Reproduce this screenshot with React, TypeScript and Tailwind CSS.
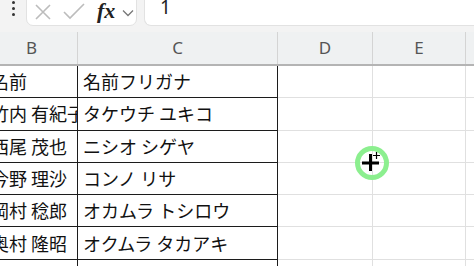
import React from 'react';

const rows: [string, string][] = [
  ['名前', '名前フリガナ'],
  ['竹内 有紀子', 'タケウチ ユキコ'],
  ['西尾 茂也', 'ニシオ シゲヤ'],
  ['今野 理沙', 'コンノ リサ'],
  ['岡村 稔郎', 'オカムラ トシロウ'],
  ['奥村 隆昭', 'オクムラ タカアキ'],
  ['', ''],
];

const jp = { fontFamily: '"Noto Sans CJK JP", "Noto Sans", sans-serif' };
const ui = { fontFamily: '"Noto Sans", "Open Sans", sans-serif' };

function Toolbar() {
  return (
    <div className="h-[32px] bg-[#f3f3f3] flex items-start">
      <div className="w-[26px] flex flex-col items-center gap-[3px] pt-[1px] pl-[1px]">
        <span className="w-[3px] h-[3px] rounded-full bg-[#333]" />
        <span className="w-[3px] h-[3px] rounded-full bg-[#333]" />
        <span className="w-[3px] h-[3px] rounded-full bg-[#333]" />
      </div>
      <div className="-mt-[8px] h-[34px] w-[111px] bg-white border border-[#e2e2e2] rounded-[7px] flex items-center pt-[8px]">
        <svg width="18" height="18" viewBox="0 0 18 18" className="ml-[7px] -mt-[3px]">
          <path d="M2 2 L16 16 M16 2 L2 16" stroke="#bcbcbc" strokeWidth="1.6" fill="none" />
        </svg>
        <svg width="22" height="18" viewBox="0 0 22 18" className="ml-[11px] -mt-[3px]">
          <path d="M1 9 L7 15 L21 1" stroke="#bcbcbc" strokeWidth="1.6" fill="none" />
        </svg>
        <span
          className="ml-[12px] -mt-[5px] text-[22px] italic font-bold text-[#222] leading-none"
          style={{ fontFamily: '"Liberation Serif", serif' }}
        >
          fx
        </span>
        <svg width="12" height="8" viewBox="0 0 12 8" className="ml-[7px]">
          <path d="M1 1.5 L6 6.5 L11 1.5" stroke="#777" strokeWidth="1.3" fill="none" />
        </svg>
      </div>
      <div className="-mt-[8px] h-[34px] flex-1 ml-[7px] bg-white border border-r-0 border-[#e2e2e2] rounded-l-[7px] flex items-center pl-[15px] pt-[8px]">
        <span className="text-[19px] text-[#222] leading-none -mt-[11px]" style={ui}>
          1
        </span>
      </div>
    </div>
  );
}

function Header() {
  return (
    <div className="h-[34px] flex bg-[#eff1f2] border-b-2 border-[#b4b4b4] text-[17px] text-[#555]" style={ui}>
      <div className="w-[78px] border-r border-[#d4d4d4] flex items-center pl-[26px]">B</div>
      <div className="w-[200px] border-r border-[#d4d4d4] flex items-center justify-center">C</div>
      <div className="w-[95px] border-r border-[#d4d4d4] flex items-center justify-center">D</div>
      <div className="w-[93px] border-r border-[#d4d4d4] flex items-center justify-center">E</div>
      <div className="flex-1" />
    </div>
  );
}

export default function App() {
  return (
    <div className="w-[474px] h-[266px] overflow-hidden bg-white relative">
      <Toolbar />
      <Header />
      <div className="flex flex-col text-[18px] text-[#111]" style={jp}>
        {rows.map(([name, kana], i) => (
          <div key={i} className="h-[32.3px] flex shrink-0">
            <div className="w-[78px] border-r border-b border-[#1c1c1c] overflow-hidden flex items-center whitespace-nowrap">
              <span className="-ml-[9px]">{name}</span>
            </div>
            <div className="w-[200px] border-r border-b border-[#1c1c1c] flex items-center pl-[5px] whitespace-nowrap">
              {kana}
            </div>
            <div className="w-[95px] border-r border-b border-[#e0e0e0]" />
            <div className="w-[93px] border-r border-b border-[#e0e0e0]" />
            <div className="flex-1 border-b border-[#e0e0e0]" />
          </div>
        ))}
      </div>
      {/* cursor highlight */}
      <div className="absolute left-[355px] top-[146px] w-[34px] h-[34px] rounded-full border-[5px] border-[#8cef8f]" />
      <svg className="absolute left-[360px] top-[150px]" width="24" height="24" viewBox="0 0 24 24">
        <path d="M10.5 4 V21 M2 13 H19" stroke="#000" strokeWidth="3" fill="none" />
        <path d="M16.5 2 V9 M13 5.5 H20" stroke="#000" strokeWidth="1.2" fill="none" />
      </svg>
    </div>
  );
}
